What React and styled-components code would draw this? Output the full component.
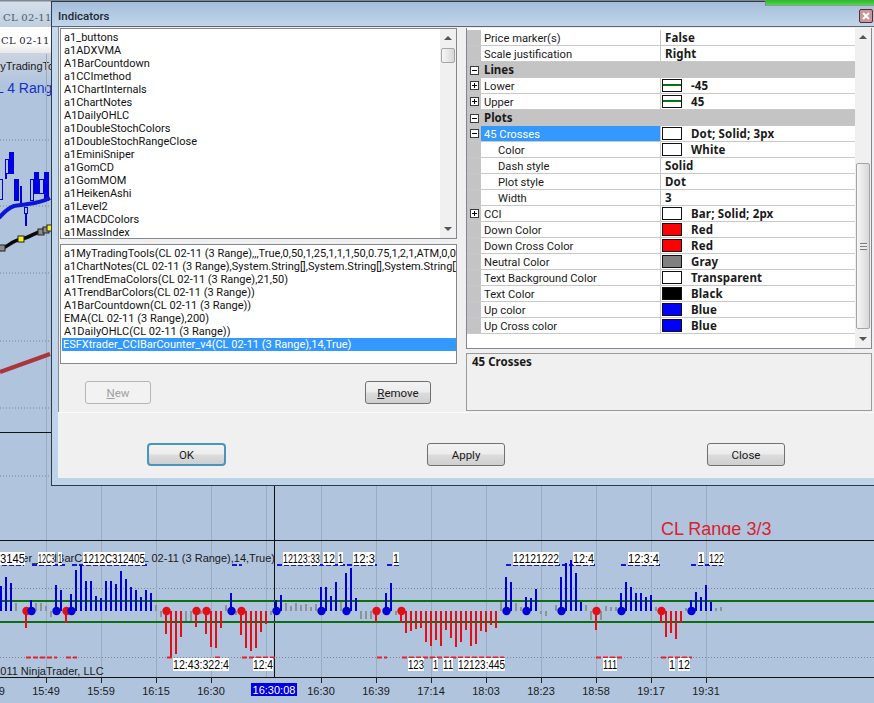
import React from 'react'
import styled, { createGlobalStyle, css } from 'styled-components'

const GlobalStyle = createGlobalStyle`
  html, body { margin: 0; padding: 0; background: #b0c4de; }
  body { font-family: Roboto, "Liberation Sans", sans-serif; }
`

const INDICATORS = [
  'a1_buttons', 'a1ADXVMA', 'A1BarCountdown', 'a1CCImethod', 'A1ChartInternals', 'a1ChartNotes',
  'A1DailyOHLC', 'a1DoubleStochColors', 'a1DoubleStochRangeClose', 'a1EminiSniper', 'a1GomCD',
  'a1GomMOM', 'a1HeikenAshi', 'a1Level2', 'a1MACDColors', 'a1MassIndex',
]

const APPLIED = [
  'a1MyTradingTools(CL 02-11 (3 Range),,,True,0,50,1,25,1,1,1,50,0.75,1,2,1,ATM,0,0,0,0,0,0,0',
  'a1ChartNotes(CL 02-11 (3 Range),System.String[],System.String[],System.String[],System.String[]',
  'a1TrendEmaColors(CL 02-11 (3 Range),21,50)',
  'A1TrendBarColors(CL 02-11 (3 Range))',
  'A1BarCountdown(CL 02-11 (3 Range))',
  'EMA(CL 02-11 (3 Range),200)',
  'A1DailyOHLC(CL 02-11 (3 Range))',
  'ESFXtrader_CCIBarCounter_v4(CL 02-11 (3 Range),14,True)',
]

const PROPS = [
  { name: 'Price marker(s)', value: 'False' },
  { name: 'Scale justification', value: 'Right' },
  { name: 'Lines', section: true, toggle: 'minus' },
  { name: 'Lower', value: '-45', toggle: 'plus', line: true },
  { name: 'Upper', value: '45', toggle: 'plus', line: true },
  { name: 'Plots', section: true, toggle: 'minus' },
  { name: '45 Crosses', value: 'Dot; Solid; 3px', toggle: 'minus', swatch: '#fff', selected: true },
  { name: 'Color', value: 'White', swatch: '#fff', indent: true },
  { name: 'Dash style', value: 'Solid', indent: true },
  { name: 'Plot style', value: 'Dot', indent: true },
  { name: 'Width', value: '3', indent: true },
  { name: 'CCI', value: 'Bar; Solid; 2px', toggle: 'plus', swatch: '#fff' },
  { name: 'Down Color', value: 'Red', swatch: '#f00' },
  { name: 'Down Cross Color', value: 'Red', swatch: '#f00' },
  { name: 'Neutral Color', value: 'Gray', swatch: '#808080' },
  { name: 'Text Background Color', value: 'Transparent', swatch: '#fff' },
  { name: 'Text Color', value: 'Black', swatch: '#000' },
  { name: 'Up color', value: 'Blue', swatch: '#00f' },
  { name: 'Up Cross color', value: 'Blue', swatch: '#00f' },
]

// one token per bar, 5px apart: b/r/g colour, height from the zero line, * = cross dot
const BARS = `b25 b34 b28 g8 _ r-17* b11* g8 g8 g5 g-6 b26* b21 r-12* b17* b41 b46 b30 b30 b15 b13 b30 b30 b27 b40 b32 b24 b21 b14 b21 b18
g6 g-6 r-23* r-46 r-43 r-26 g-10 g-10 r-16* g-3 r-23* r-36 r-37 r-17 g6 b18* g-4 r-24* r-37 r-40 r-37 r-21 r-13 g-4 b11* b16 g8 g5 g8 g6 g7 g4 g7
b24* b24 b15 b29 g9 b38* b43 b13 g-8 g-8 g-8 r-11* _ b18* b28 g-4 r-12* r-22 r-20 r-18 r-17 r-31 r-35 r-29
r-35 r-19 r-27 r-36 r-31 r-19 r-35 r-33 r-20 r-21 r-14 r-17 g9 b34* b29 g8 g4 b14* b13 b22 g-3 g-5 _ g6 b34* b48 b51 b38 b9 g6 g-9 r-19* g-9 g5 g4 g4
b18* b29 b24 b18 b18 b14 b16 g4 r-12* r-26 r-22 r-28 r-12 g3 b11* b19 b14 b26 b9 g3 g4`
  .trim().split(/\s+/)

const BAR_COLORS = { b: '#0000d4', r: '#e40f14', g: '#8d9298' }

const TIMES = [
  [-9, '15:39'], [46, '15:49'], [101, '15:59'], [156, '16:15'], [211, '16:30'],
  [321, '16:30'], [376, '16:39'], [431, '17:14'], [486, '18:03'], [541, '18:23'],
  [596, '18:58'], [651, '19:17'], [706, '19:31'],
]

const TOP_LABELS = [
  [0, 25, '3145'], [38, 17, '12C3'], [58, 4, '1'], [83, 62, '1212C312405'], [283, 37, '12123:33'],
  [323, 12, '12'], [338, 5, '1'], [353, 22, '12:3'], [393, 6, '1'], [513, 46, '12121222'],
  [573, 21, '12:4'], [628, 31, '12:3:4'], [698, 6, '1'], [709, 15, '122'],
]

const LOW_LABELS = [
  [173, 56, '12:43:322:4'], [253, 20, '12:4'], [408, 16, '123'], [433, 5, '1'], [443, 10, '11'],
  [458, 47, '12123:445'], [603, 14, '111'], [669, 6, '1'], [678, 12, '12'],
]

const BLUE_DASHES = [[2, 24], [32, 65], [72, 147], [232, 242], [277, 377], [387, 400], [506, 596], [621, 660], [691, 722]]
const RED_DASHES = [[26, 57], [66, 77], [167, 174], [215, 222], [242, 277], [377, 387], [402, 504], [596, 622], [661, 692]]

const CANDLES = [
  [-3, 179, 6, 20, false], [5, 159, 4, 14, false], [9, 152, 5, 21, true], [14, 179, 5, 21, true],
  [24, 207, 4, 6, false], [30, 179, 4, 21, false], [34, 172, 5, 21, true], [39, 179, 5, 14, false], [44, 172, 5, 28, true],
]

const Stage = styled.div`
  position: relative;
  width: 874px;
  height: 703px;
  overflow: hidden;
  display: flex;
  flex-direction: column;
  background: #b0c4de;
`

const ChartTab = styled.div`
  height: ${p => (p.$active ? 26 : 27)}px;
  padding: ${p => (p.$active ? '2px 0 0 1px' : '0 0 4px 3px')};
  box-sizing: border-box;
  font: 10px/1 "DejaVu Serif", serif;
  letter-spacing: 0.3px;
  display: flex;
  align-items: ${p => (p.$active ? 'center' : 'flex-end')};
  color: ${p => (p.$active ? '#1c2230' : '#4c5c70')};
  background: ${p => (p.$active
    ? 'linear-gradient(#ffffff 60%, #e8e8ea)'
    : 'linear-gradient(#7d8793 0, #7d8793 1px, #d4dfeb 2px, #bfcede)')};
`

const ChartSvg = styled.svg`
  display: block;
  flex: 1;
  width: 874px;
  height: 650px;
`

const Progress = styled.div`
  position: absolute;
  left: 765px;
  top: 0;
  width: 109px;
  height: 6px;
  box-sizing: border-box;
  border-left: 1px solid #888;
  border-bottom: 1px solid #8fa090;
  background: linear-gradient(#2db52d, #4fd64f);
`

const Dialog = styled.section`
  position: absolute;
  left: 51px;
  top: 1px;
  width: 830px;
  height: 485px;
  box-sizing: border-box;
  display: flex;
  flex-direction: column;
  padding: 0 0 7px 6px;
  border: 1px solid #2f3b46;
  border-width: 1px 0 1px 1px;
  background: linear-gradient(#a4bdd9 0, #c6daee 28px, #bcd3ea 100%);
`

const TitleBar = styled.header`
  height: 25px;
  flex: none;
  display: flex;
  align-items: center;
  justify-content: space-between;
  padding: 3px 9px 0 6px;
  margin-left: -6px;
  box-sizing: border-box;
  font: 500 11.5px Roboto, sans-serif;
  color: #1e2833;
  border-bottom: 1px solid #5c6670;
`

const CloseBtn = styled.span`
  width: 12px;
  height: 12px;
  border: 1px solid #5c2c30;
  border-radius: 2px;
  background: #c99698;
  display: flex;
  align-items: center;
  justify-content: center;
  margin-right: -1px;
`

const Body = styled.div`
  flex: 1;
  display: flex;
  background: #f0f0f0;
  min-height: 0;
`

const LeftCol = styled.div`
  width: 408px;
  flex: none;
  padding: 1px 10px 0 1px;
  box-sizing: border-box;
  display: flex;
  flex-direction: column;
  gap: 5px;
  border-left: 1px solid #8a8a8a;
`

const RightCol = styled.div`
  width: 406px;
  flex: none;
  display: flex;
  flex-direction: column;
  gap: 4px;
`

const ListBox = styled.div`
  position: relative;
  width: 397px;
  height: ${p => p.$height}px;
  box-sizing: border-box;
  border: 1px solid #828790;
  background: #fff;
  padding-top: ${p => p.$top}px;
  overflow: hidden;
`

const ListRow = styled.div`
  height: 13px;
  line-height: 13px;
  padding: 0 ${p => p.$pr}px 0 ${p => (p.$selected ? 1 : 2)}px;
  margin-left: 1px;
  font-size: 11px;
  white-space: nowrap;
  overflow: hidden;
  color: ${p => (p.$selected ? '#fff' : '#111')};
  background: ${p => (p.$selected ? '#3399ff' : 'transparent')};
`

const ScrollTrack = styled.div`
  position: absolute;
  right: 0;
  top: 0;
  bottom: 0;
  width: 16px;
  background: #f0f0f0;
`

const Arrow = styled.span`
  position: absolute;
  ${p => (p.$up ? 'top: 7px;' : 'bottom: 7px;')}
  left: 4px;
  width: 0;
  height: 0;
  border-left: 4px solid transparent;
  border-right: 4px solid transparent;
  ${p => (p.$up ? 'border-bottom: 4px solid #555;' : 'border-top: 4px solid #555;')}
`

const Thumb = styled.span`
  position: absolute;
  left: 1px;
  top: ${p => p.$top}px;
  width: 14px;
  height: ${p => p.$height}px;
  box-sizing: border-box;
  border: 1px solid #a4a4a4;
  border-radius: 2px;
  background: linear-gradient(90deg, #f6f6f6, #d8d8d8);
  display: flex;
  align-items: center;
  justify-content: center;
`

const Grip = styled.span`
  width: 7px;
  height: 7px;
  background: repeating-linear-gradient(#7a7a7a 0 1px, #eee 1px 3px);
`

const ButtonRow = styled.div`
  display: flex;
  justify-content: space-between;
  padding: 12px 26px 0 25px;
  width: 397px;
  box-sizing: border-box;
`

const Button = styled.div`
  height: 23px;
  width: ${p => p.$width}px;
  margin-right: ${p => p.$gap || 0}px;
  box-sizing: border-box;
  display: flex;
  align-items: center;
  justify-content: center;
  font-size: 11.5px;
  border-radius: 3px;
  color: #1a1a1a;
  border: 1px solid #707070;
  background: linear-gradient(#f3f3f3, #ececec 48%, #dcdcdc 52%, #cfcfcf);
  ${p => p.$disabled && css`
    color: #a0a0a0;
    border-color: #b5b5b5;
    background: #f2f2f2;
  `}
  ${p => p.$focus && css`
    border: 2px solid #4a94bd;
    border-radius: 4px;
  `}
`

const Grid = styled.div`
  position: relative;
  height: 321px;
  box-sizing: border-box;
  border: 1px solid #828790;
  border-top: 0;
  margin-top: 1px;
  padding-top: 2px;
  background: #fff;
`

const Row = styled.div`
  display: flex;
  width: 388px;
  height: 16px;
  box-sizing: border-box;
  font-size: 11.2px;
  line-height: 15px;
  color: #1a1a1a;
  ${p => p.$section
    ? 'background: #c4c4c4;'
    : 'border-bottom: 1px solid #c8c8c8;'}
`

const Gutter = styled.span`
  width: 14px;
  flex: none;
  background: #c4c4c4;
  display: flex;
  align-items: center;
  justify-content: center;
`

const Toggle = styled.span`
  position: relative;
  width: 9px;
  height: 9px;
  box-sizing: border-box;
  border: 1px solid #3a3a3a;
  background: #fff;
  &::before {
    content: '';
    position: absolute;
    left: 1px;
    top: 3px;
    width: 5px;
    height: 1px;
    background: #000;
  }
  ${p => p.$plus && css`
    &::after {
      content: '';
      position: absolute;
      left: 3px;
      top: 1px;
      width: 1px;
      height: 5px;
      background: #000;
    }
  `}
`

const Name = styled.span`
  width: 180px;
  flex: none;
  box-sizing: border-box;
  padding-left: ${p => (p.$indent ? 17 : 3)}px;
  white-space: nowrap;
  ${p => (p.$section
    ? 'font: 700 11.5px/15px "Noto Sans", sans-serif;'
    : 'border-right: 1px solid #c8c8c8; padding-top: 1px;')}
  ${p => p.$selected && 'background: #3399ff; color: #fff;'}
`

const Value = styled.span`
  display: flex;
  align-items: center;
  gap: 9px;
  padding-left: ${p => (p.$plain ? 4 : 1)}px;
  font: 700 11.5px/15px "Noto Sans", sans-serif;
  letter-spacing: 0.15px;
  white-space: nowrap;
`

const Swatch = styled.span`
  position: relative;
  width: 20px;
  height: 13px;
  flex: none;
  box-sizing: border-box;
  border: 1px solid #111;
  background: ${p => p.$color};
  ${p => p.$line && css`
    &::after {
      content: '';
      position: absolute;
      left: 0;
      right: 0;
      top: 4px;
      height: 2px;
      background: #0f6e17;
    }
  `}
`

const Description = styled.div`
  height: 58px;
  box-sizing: border-box;
  border: 1px solid #9a9a9a;
  padding: 0 5px;
  font: 700 11.5px/15px "Noto Sans", sans-serif;
  color: #1a1a1a;
`

const Footer = styled.footer`
  height: 66px;
  flex: none;
  box-sizing: border-box;
  background: #f0f0f0;
  border-top: 1px solid #fafafa;
  display: flex;
  padding: 30px 0 0 89px;
`

const Chart = () => (
  <ChartSvg viewBox="0 53 874 650">
    <defs>
      <linearGradient id="head" x1="0" y1="0" x2="0" y2="1">
        <stop offset="0" stopColor="#ccd4df" />
        <stop offset="1" stopColor="#b0c4de" />
      </linearGradient>
      <clipPath id="title"><rect x="600" y="510" width="274" height="25" /></clipPath>
    </defs>
    <rect x="0" y="53" width="874" height="32" fill="url(#head)" />
    <g fontFamily="Liberation Sans, sans-serif">
      <text x="-9" y="70" fontSize="11" fill="#1a1a1a">MyTradingTools</text>
      <text x="-4" y="93" fontSize="14" fill="#1530c8">L 4 Range</text>
    </g>

    {[140, 206, 273, 341, 408, 476, 588.5, 657.5].map(y => (
      <line key={y} x1="0" x2="874" y1={y} y2={y} stroke="#7d8691" strokeDasharray="1 2" />
    ))}
    {[46.5, 101.5, 156.5, 211.5, 266.5, 321.5, 376.5, 431.5, 486.5, 541.5, 596.5, 651.5, 706.5].map(x => (
      <line key={x} x1={x} x2={x} y1="54" y2="677" stroke="#9cacc0" />
    ))}

    {CANDLES.map(([x, y, w, h, solid]) => (
      <rect key={`${x}-${y}`} x={x + 0.5} y={y + 0.5} width={w - 1} height={h} fill={solid ? '#0000e0' : '#b0c4de'} stroke="#0000e0" />
    ))}
    <path d="M6 173V179M21 186V205M26 213V226" stroke="#0000e0" strokeWidth="2" fill="none" />
    <path d="M-1 218C4 212 8 208 14 206C20 205 24 205 28 204C36 203 42 202 50 198" stroke="#0c14d8" strokeWidth="4" fill="none" />
    <path d="M0 250C8 246 14 240 21 239C30 238 34 232 50 228" stroke="#0a0a0a" strokeWidth="3.5" fill="none" />
    {[[2, 248, '#8c8c8c'], [21, 239, '#f4f01e'], [41, 232, '#8c8c8c'], [46, 230, '#8c8c8c'], [50, 228, '#f4f01e']].map(([x, y, c]) => (
      <rect key={x} x={x - 3} y={y - 3} width="6" height="6" fill={c} stroke="#222" />
    ))}
    <path d="M0 372L50 354" stroke="#a8363a" strokeWidth="4" fill="none" />
    <line x1="0" x2="51" y1="432.5" y2="432.5" stroke="#111" />

    <line x1="0" x2="874" y1="540.5" y2="540.5" stroke="#111" />
    <line x1="0" x2="874" y1="677.5" y2="677.5" stroke="#111" />
    <line x1="274.5" x2="274.5" y1="485" y2="677" stroke="#111" />
    {TIMES.map(([x]) => (
      <line key={x} x1={x + 0.5} x2={x + 0.5} y1="677" y2="683" stroke="#222" />
    ))}

    <line x1="0" x2="874" y1="601" y2="601" stroke="#0c6e12" strokeWidth="2" />
    <line x1="0" x2="874" y1="622" y2="622" stroke="#0c6e12" strokeWidth="2" />

    {BLUE_DASHES.map(([a, b]) => (
      <line key={a} x1={a} x2={b} y1="565" y2="565" stroke="#1616d8" strokeWidth="2" strokeDasharray="5 2" />
    ))}
    {RED_DASHES.map(([a, b]) => (
      <line key={a} x1={a} x2={b} y1="657.5" y2="657.5" stroke="#e8202a" strokeWidth="2" strokeDasharray="5 2" />
    ))}

    {BARS.map((t, i) => {
      if (t === '_') return null
      const h = parseInt(t.slice(1), 10)
      const x = 5 * i
      return (
        <rect key={i} x={x} y={h > 0 ? 611 - h : 611} width="2" height={Math.abs(h)} fill={BAR_COLORS[t[0]]} />
      )
    })}
    {BARS.map((t, i) => (t.endsWith('*')
      ? <circle key={i} cx={5 * i + 1.5} cy="611" r="4.2" fill={BAR_COLORS[t[0]]} />
      : null))}

    <g fontFamily="Liberation Sans, sans-serif" fontSize="11" fill="#1a1a1a">
      <text x="275" y="562" textAnchor="end">ESFXtrader_CCIBarCounter_v4(CL 02-11 (3 Range),14,True)</text>
      {TOP_LABELS.map(([x, w, s]) => (
        <g key={x}>
          <rect x={x} y="552" width={w} height="13" fill="#fff" />
          <text x={x} y="563" fontSize="13" fill="#000" textLength={w} lengthAdjust="spacingAndGlyphs">{s}</text>
        </g>
      ))}
      {LOW_LABELS.map(([x, w, s]) => (
        <g key={x}>
          <rect x={x} y="658" width={w} height="13" fill="#fff" />
          <text x={x} y="669" fontSize="13" fill="#000" textLength={w} lengthAdjust="spacingAndGlyphs">{s}</text>
        </g>
      ))}
      <text x="-17" y="675" fontSize="11">© 2011 NinjaTrader, LLC</text>
      {TIMES.map(([x, s]) => (
        <text key={x} x={x} y="695" textAnchor="middle">{s}</text>
      ))}
      <rect x="251" y="683" width="46" height="13" fill="#0000e0" />
      <text x="274" y="694" fill="#fff" textAnchor="middle">16:30:08</text>
      <text x="661" y="535" fontSize="18" fill="#d9222f" clipPath="url(#title)">CL Range 3/3</text>
    </g>
  </ChartSvg>
)

const PropertyRow = ({ name, value, section, toggle, line, swatch, selected, indent }) => (
  <Row $section={section}>
    <Gutter>{toggle && <Toggle $plus={toggle === 'plus'} />}</Gutter>
    <Name $section={section} $selected={selected} $indent={indent}>{name}</Name>
    {!section && (
      <Value $plain={!swatch && !line}>
        {(swatch || line) && <Swatch $color={swatch || '#fff'} $line={line} />}
        {value}
      </Value>
    )}
  </Row>
)

export default function App() {
  return (
    <>
      <GlobalStyle />
      <Stage>
        <ChartTab>CL 02-11</ChartTab>
        <ChartTab $active>CL 02-11</ChartTab>
        <Chart />
        <Dialog>
          <TitleBar>
            Indicators
            <CloseBtn>
              <svg width="8" height="8" viewBox="0 0 8 8">
                <path d="M1 1L7 7M7 1L1 7" stroke="#fff" strokeWidth="2" />
              </svg>
            </CloseBtn>
          </TitleBar>
          <Body>
            <LeftCol>
              <ListBox $height={211} $top={2}>
                {INDICATORS.map(s => <ListRow key={s} $pr={16}>{s}</ListRow>)}
                <ScrollTrack>
                  <Arrow $up />
                  <Thumb $top={19} $height={15} />
                  <Arrow />
                </ScrollTrack>
              </ListBox>
              <ListBox $height={120} $top={2}>
                {APPLIED.map((s, i) => (
                  <ListRow key={s} $pr={0} $selected={i === APPLIED.length - 1}>{s}</ListRow>
                ))}
              </ListBox>
              <ButtonRow>
                <Button $width={66} $disabled><span><u>N</u>ew</span></Button>
                <Button $width={66}><span><u>R</u>emove</span></Button>
              </ButtonRow>
            </LeftCol>
            <RightCol>
              <Grid>
                {PROPS.map(p => <PropertyRow key={p.name + (p.value || '')} {...p} />)}
                <ScrollTrack>
                  <Arrow $up />
                  <Thumb $top={135} $height={166}><Grip /></Thumb>
                  <Arrow />
                </ScrollTrack>
              </Grid>
              <Description>45 Crosses</Description>
            </RightCol>
          </Body>
          <Footer>
            <Button $width={79} $focus $gap={201}>OK</Button>
            <Button $width={78} $gap={202}>Apply</Button>
            <Button $width={78}>Close</Button>
          </Footer>
        </Dialog>
        <Progress />
      </Stage>
    </>
  )
}
